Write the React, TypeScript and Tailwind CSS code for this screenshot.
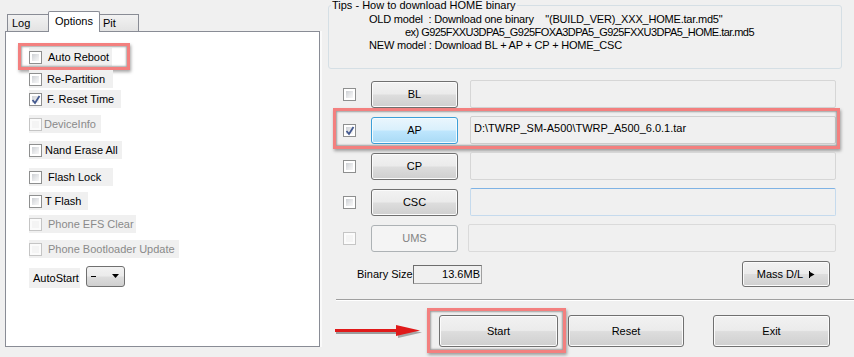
import clsx from "clsx";

const font = "font-['Liberation_Sans',Arial,sans-serif]";

const Check = ({ checked = false, disabled = false }: { checked?: boolean; disabled?: boolean }) => (
  <span
    className={clsx(
      "relative w-[13px] h-[13px] shrink-0 border p-[2px]",
      disabled ? "border-[#c5c5c5] bg-[#fbfbfb]" : "border-[#8e8f8f] bg-white"
    )}
  >
    <span
      className={clsx(
        "block w-full h-full",
        disabled
          ? "bg-[#f4f4f4]"
          : "bg-[linear-gradient(135deg,#cdd0d4_0%,#e9eaec_60%,#f7f7f7_100%)]"
      )}
    />
    {checked && (
      <svg className="absolute left-[1px] top-[1px]" width="10" height="10" viewBox="0 0 10 10">
        <path d="M1.5 5 L4 8 L8.5 1" fill="none" stroke="#44598f" strokeWidth="1.8" />
      </svg>
    )}
  </span>
);

const Highlight = ({ className }: { className: string }) => (
  <span
    className={clsx(
      "absolute pointer-events-none border-[3px] border-[#f3807f] shadow-[inset_0_0_2px_1px_rgba(0,0,0,0.35),1px_2px_3px_rgba(0,0,0,0.35)]",
      className
    )}
  />
);

const WinButton = ({
  label,
  className,
  variant = "normal",
  children,
}: {
  label: string;
  className: string;
  variant?: "normal" | "hot" | "disabled";
  children?: React.ReactNode;
}) => (
  <div
    className={clsx(
      "flex items-center justify-center shrink-0 rounded-[3px] border text-[11px]",
      variant === "normal" &&
        "border-[#707070] text-black bg-[linear-gradient(to_bottom,#f2f2f2_0%,#ebebeb_48%,#dddddd_52%,#cfcfcf_100%)] shadow-[inset_0_0_0_1px_#fbfbfb]",
      variant === "hot" &&
        "border-[#3c9fd8] text-black bg-[linear-gradient(to_bottom,#eaf6fd_0%,#d9f0fc_48%,#bee6fd_52%,#a9daf5_100%)] shadow-[inset_0_0_0_1px_#f4fbfe]",
      variant === "disabled" && "border-[#adb2b5] text-[#838383] bg-[#f4f4f4]",
      className
    )}
  >
    {label}
    {children}
  </div>
);

type Opt = { label: string; box: string; checked?: boolean; disabled?: boolean; gap?: string };

const options: Opt[] = [
  { label: "Auto Reboot", box: "mt-[16px] w-[83px]", gap: "ml-[6px]" },
  { label: "Re-Partition", box: "mt-[4px] w-[84px]", gap: "ml-[5px]" },
  { label: "F. Reset Time", box: "mt-[2px] w-[92px]", checked: true, gap: "ml-[5px]" },
  { label: "DeviceInfo", box: "mt-[7px] w-[72px]", disabled: true, gap: "ml-[2px]" },
  { label: "Nand Erase All", box: "mt-[8px] w-[93px]", gap: "ml-[3px]" },
  { label: "Flash Lock", box: "mt-[9px] w-[84px]", gap: "ml-[6px]" },
  { label: "T Flash", box: "mt-[6px] w-[59px]", gap: "ml-[3px]" },
  { label: "Phone EFS Clear", box: "mt-[5px] w-[107px]", disabled: true, gap: "ml-[6px]" },
  { label: "Phone Bootloader Update", box: "mt-[7px] w-[150px]", disabled: true, gap: "ml-[6px]" },
];

type Row = { name: string; variant?: "normal" | "hot" | "disabled"; checked?: boolean; disabled?: boolean; path?: string; field: string };

const rows: Row[] = [
  { name: "BL", field: "border-[#d6d6d6]" },
  { name: "AP", variant: "hot", checked: true, path: "D:\\TWRP_SM-A500\\TWRP_A500_6.0.1.tar", field: "border-[#d0d0d0]" },
  { name: "CP", field: "border-[#d6d6d6]" },
  { name: "CSC", field: "border-[#c5daed] border-t-[#7fb3e5]" },
  { name: "UMS", variant: "disabled", disabled: true, field: "border-[#dadada]" },
];

export default function App() {
  return (
    <div className={clsx("w-[854px] h-[357px] bg-[#f0f0f0] flex overflow-hidden text-[11px] text-black leading-none", font)}>
      {/* left: option tabs */}
      <div className="w-[322px] shrink-0 pl-[5px] pt-[11px]">
        <div className="flex items-end h-[20px] pl-[2px]">
          <div className="w-[41px] h-[17px] border border-b-0 border-r-0 border-[#898c95] bg-[linear-gradient(to_bottom,#f2f2f2,#e3e3e3)] pl-[4px] pt-[3px]">
            Log
          </div>
          <div className="relative z-10 w-[52px] h-[21px] -mb-px border border-b-0 border-[#898c95] bg-white pl-[6px] pt-[4px] rounded-t-[2px]">
            Options
          </div>
          <div className="w-[39px] h-[17px] border border-b-0 border-l-0 border-[#898c95] bg-[linear-gradient(to_bottom,#f2f2f2,#e3e3e3)] pl-[3px] pt-[3px]">
            Pit
          </div>
        </div>
        <div className="w-[315px] h-[316px] border border-[#898c95] bg-white pl-[23px] flex flex-col shadow-[2px_0_0_#fafafa]">
          {options.map((o, i) => (
            <div key={o.label} className={clsx("relative h-[18px] flex items-center bg-[#f0f0f0] shrink-0", o.box)}>
              <Check checked={o.checked} disabled={o.disabled} />
              <span className={clsx(o.gap, "whitespace-nowrap", o.disabled ? "text-[#8a8a8a]" : "text-black")}>{o.label}</span>
              {i === 0 && <Highlight className="-left-[11px] -top-[5px] -right-[18px] -bottom-[4px]" />}
            </div>
          ))}
          <div className="mt-[10px] flex items-center">
            <div className="h-[20px] w-[51px] bg-[#f0f0f0] flex items-center pl-[4px]">AutoStart</div>
            <div className="ml-[6px] -mt-[4px] w-[39px] h-[21px] rounded-[3px] border border-[#707070] bg-[linear-gradient(to_bottom,#f2f2f2_0%,#ebebeb_48%,#dddddd_52%,#cfcfcf_100%)] flex items-center pl-[4px] pr-[5px]">
              <span className="w-[5px] h-[1px] bg-black" />
              <svg className="ml-auto" width="7" height="4" viewBox="0 0 7 4">
                <path d="M0 0 H7 L3.5 4 Z" fill="#000" />
              </svg>
            </div>
          </div>
        </div>
      </div>

      {/* right: files */}
      <div className="flex-1 flex flex-col">
        <fieldset className="ml-[6px] w-[514px] h-[69px] border border-[#d5dfe5] rounded-[3px] pl-[2px]">
          <legend className="px-[1px] leading-[11px]">Tips - How to download HOME binary</legend>
          <div className="pl-[38px] pt-[2px] leading-[13px] whitespace-pre">
            <div className="tracking-[-0.2px]">{'OLD model  : Download one binary    "(BUILD_VER)_XXX_HOME.tar.md5"'}</div>
            <div className="pl-[36px] tracking-[-0.55px]">ex) G925FXXU3DPA5_G925FOXA3DPA5_G925FXXU3DPA5_HOME.tar.md5</div>
            <div className="tracking-[-0.2px]">NEW model : Download BL + AP + CP + HOME_CSC</div>
          </div>
        </fieldset>

        <div className="mt-[11px] flex flex-col gap-[8px] pr-[18px]">
          {rows.map((r) => (
            <div key={r.name} className="relative h-[28px] flex items-center pl-[21px]">
              <Check checked={r.checked} disabled={r.disabled} />
              <WinButton label={r.name} variant={r.variant} className="ml-[15px] w-[87px] h-[27px]" />
              <div
                className={clsx(
                  "flex-1 h-[28px] border rounded-[2px] bg-[#f0f0f0] px-[3px] pt-[6px] whitespace-nowrap",
                  r.name === "UMS" ? "ml-[10px]" : "ml-[12px]",
                  r.field
                )}
              >
                {r.path}
              </div>
              {r.name === "AP" && <Highlight className="left-[11px] -right-[4px] -top-[8px] -bottom-[5px]" />}
            </div>
          ))}
        </div>

        <div className="mt-[9px] h-[26px] flex items-center pl-[35px] pr-[24px]">
          <span className="w-[56px]">Binary Size</span>
          <div className="w-[69px] h-[19px] border border-[#a0a0a0] border-t-[#6d6d6d] border-l-[#6d6d6d] bg-[#f0f0f0] flex items-center justify-end pr-[1px]">
            13.6MB
          </div>
          <WinButton label="Mass D/L" className="ml-auto w-[88px] h-[26px]">
            <svg className="ml-[6px]" width="6" height="7" viewBox="0 0 6 7">
              <path d="M0.5 0 V7" stroke="#000" strokeWidth="1" />
              <path d="M1 1 L5.5 3.5 L1 6 Z" fill="#000" />
            </svg>
          </WinButton>
        </div>

        <div className="mt-[12px] ml-[14px] border-t border-[#a0a0a0] border-b border-b-white" />

        <div className="mt-[14px] flex items-center pl-[12px]">
          <svg width="90" height="16" viewBox="0 0 90 16">
            <path d="M2 9.5 H70" stroke="rgba(0,0,0,0.35)" strokeWidth="3" />
            <path d="M64 4 L88 9.5 L64 15 Z" fill="rgba(0,0,0,0.3)" />
            <path d="M1 7.5 H68" stroke="#e01a1a" strokeWidth="3" />
            <path d="M62 2 L86 7.5 L62 13 Z" fill="#e01a1a" />
          </svg>
          <div className="relative ml-[15px]">
            <WinButton label="Start" className="w-[119px] h-[32px]" />
            <Highlight className="-left-[12px] -right-[8px] -top-[7px] -bottom-[6px]" />
          </div>
          <WinButton label="Reset" className="ml-[10px] w-[116px] h-[32px]" />
          <WinButton label="Exit" className="ml-[29px] w-[117px] h-[32px]" />
        </div>
      </div>
    </div>
  );
}
